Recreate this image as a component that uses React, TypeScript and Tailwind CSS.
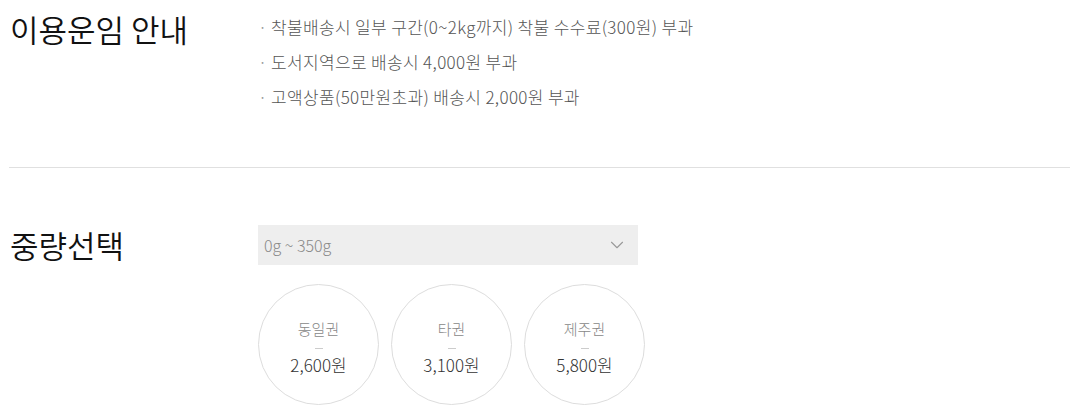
import { ChevronDown } from 'lucide-react';

const notes = [
  '착불배송시 일부 구간(0~2kg까지) 착불 수수료(300원) 부과',
  '도서지역으로 배송시 4,000원 부과',
  '고액상품(50만원초과) 배송시 2,000원 부과',
];

const zones = [
  { name: '동일권', price: '2,600원' },
  { name: '타권', price: '3,100원' },
  { name: '제주권', price: '5,800원' },
];

export default function App() {
  return (
    <div className="bg-white px-[9px] font-['Noto_Sans_CJK_KR',sans-serif] font-light text-[#222]">
      <section className="flex pt-[9px] pb-[58px]">
        <h2 className="w-[249px] shrink-0 pl-[1px] text-[31px] font-[350] leading-[40px] text-[#111]">이용운임 안내</h2>
        <ul className="flex flex-col gap-[11px] pt-[6px] text-[17px] leading-[24px] tracking-[0.35px] text-[#555]">
          {notes.map((n) => (
            <li key={n} className="flex">
              <span className="w-[13px] text-[#999]">·</span>
              <span>{n}</span>
            </li>
          ))}
        </ul>
      </section>

      <div className="h-px bg-[#e0e0e0]" />

      <section className="flex pt-[57px]">
        <h2 className="w-[249px] shrink-0 pl-[1px] text-[31px] font-[350] leading-[40px] text-[#111]">중량선택</h2>
        <div className="flex flex-col gap-[19px]">
          <div className="flex h-[40px] w-[380px] items-center justify-between bg-[#eeeeee] pl-[6px] pr-[10px] text-[16px] text-[#888]">
            <span>0g ~ 350g</span>
            <ChevronDown size={22} strokeWidth={1.2} className="text-[#999]" />
          </div>
          <div className="flex gap-[12px]">
            {zones.map((z) => (
              <div
                key={z.name}
                className="flex h-[121px] w-[121px] flex-col items-center justify-center rounded-full border border-[#dddddd] pt-[6px]"
              >
                <span className="text-[15px] leading-[20px] text-[#888]">{z.name}</span>
                <span className="mt-[9px] mb-[5px] h-px w-[8px] bg-[#ccc]" />
                <span className="text-[17px] leading-[22px] text-[#333]">{z.price}</span>
              </div>
            ))}
          </div>
        </div>
      </section>
    </div>
  );
}
